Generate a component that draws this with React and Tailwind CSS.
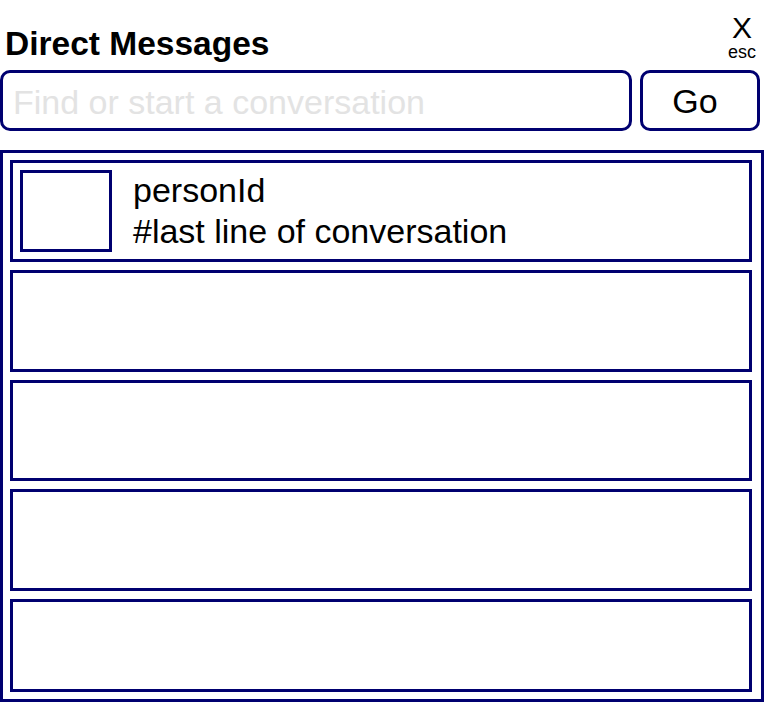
import React from "react";

const Row = ({ children, className = "" }) => (
  <div
    className={`flex items-start border-[3px] border-[#000070] p-[7px] ${className}`}
  >
    {children}
  </div>
);

const DirectMessages = () => {
  return (
    <div className="w-[764px] h-[702px] overflow-hidden bg-white text-black font-['Liberation_Sans',Arial,sans-serif]">
      <div className="flex justify-between h-[70px]">
        <h1 className="self-end pl-[5px] pb-[8px] text-[33.5px] leading-[37px] font-bold">
          Direct Messages
        </h1>
        <div className="flex flex-col items-center pt-[13px] pr-[8px]">
          <span className="text-[30px] leading-[30px]">X</span>
          <span className="text-[18px] leading-[18px]">esc</span>
        </div>
      </div>

      <div className="flex gap-[8px] pr-[4px]">
        <input
          className="w-[632px] h-[61px] border-[3px] border-[#000070] rounded-[10px] pl-[10px] pt-[3px] text-[34px] outline-none placeholder:text-[#e3e3e3]"
          placeholder="Find or start a conversation"
        />
        <button className="w-[120px] h-[61px] border-[3px] border-[#000070] rounded-[10px] pr-[10px] pt-[2px] text-[34px] bg-white">
          Go
        </button>
      </div>

      <div className="mt-[19px] h-[552px] flex flex-col gap-[8px] border-[3px] border-[#000070] pt-[7px] pb-[7px] pl-[7px] pr-[9px]">
        <Row className="h-[101.75px] shrink-0">
          <div className="w-[92px] h-full border-[3px] border-[#000070] shrink-0" />
          <div className="ml-[21px] text-[34px] leading-[41px]">
            <div>personId</div>
            <div>#last line of conversation</div>
          </div>
        </Row>
        <Row className="h-[101.75px] shrink-0" />
        <Row className="h-[101.75px] shrink-0" />
        <Row className="h-[101.75px] shrink-0" />
        <Row className="flex-1" />
      </div>
    </div>
  );
};

export default DirectMessages;
